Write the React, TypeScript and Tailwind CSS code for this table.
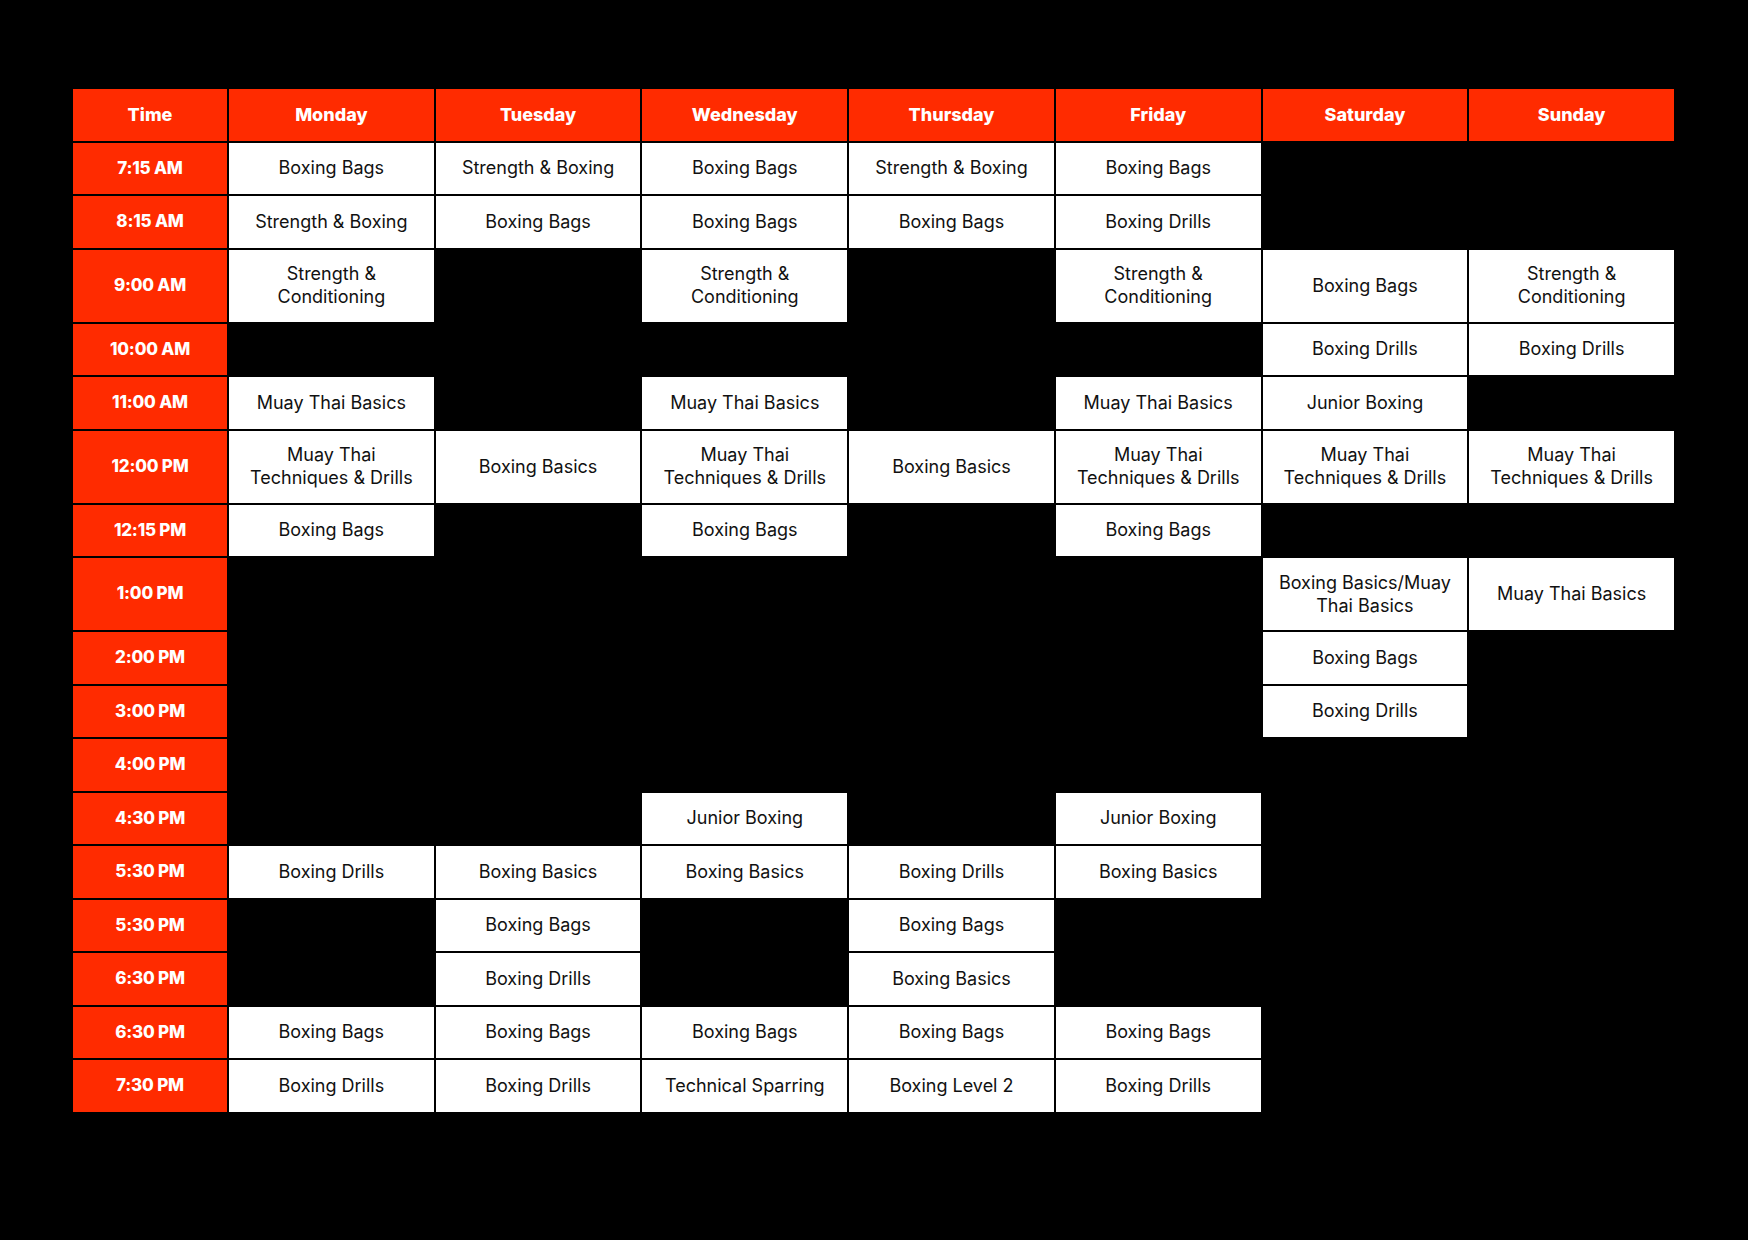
import React from "react";

type Row = {
  time: string;
  tall?: boolean;
  cells: (string | null)[];
};

const days = ["Monday", "Tuesday", "Wednesday", "Thursday", "Friday", "Saturday", "Sunday"];

const SC = "Strength &\nConditioning";
const MTT = "Muay Thai\nTechniques & Drills";

const rows: Row[] = [
  { time: "7:15 AM", cells: ["Boxing Bags", "Strength & Boxing", "Boxing Bags", "Strength & Boxing", "Boxing Bags", null, null] },
  { time: "8:15 AM", cells: ["Strength & Boxing", "Boxing Bags", "Boxing Bags", "Boxing Bags", "Boxing Drills", null, null] },
  { time: "9:00 AM", tall: true, cells: [SC, null, SC, null, SC, "Boxing Bags", SC] },
  { time: "10:00 AM", cells: [null, null, null, null, null, "Boxing Drills", "Boxing Drills"] },
  { time: "11:00 AM", cells: ["Muay Thai Basics", null, "Muay Thai Basics", null, "Muay Thai Basics", "Junior Boxing", null] },
  { time: "12:00 PM", tall: true, cells: [MTT, "Boxing Basics", MTT, "Boxing Basics", MTT, MTT, MTT] },
  { time: "12:15 PM", cells: ["Boxing Bags", null, "Boxing Bags", null, "Boxing Bags", null, null] },
  { time: "1:00 PM", tall: true, cells: [null, null, null, null, null, "Boxing Basics/Muay\nThai Basics", "Muay Thai Basics"] },
  { time: "2:00 PM", cells: [null, null, null, null, null, "Boxing Bags", null] },
  { time: "3:00 PM", cells: [null, null, null, null, null, "Boxing Drills", null] },
  { time: "4:00 PM", cells: [null, null, null, null, null, null, null] },
  { time: "4:30 PM", cells: [null, null, "Junior Boxing", null, "Junior Boxing", null, null] },
  { time: "5:30 PM", cells: ["Boxing Drills", "Boxing Basics", "Boxing Basics", "Boxing Drills", "Boxing Basics", null, null] },
  { time: "5:30 PM", cells: [null, "Boxing Bags", null, "Boxing Bags", null, null, null] },
  { time: "6:30 PM", cells: [null, "Boxing Drills", null, "Boxing Basics", null, null, null] },
  { time: "6:30 PM", cells: ["Boxing Bags", "Boxing Bags", "Boxing Bags", "Boxing Bags", "Boxing Bags", null, null] },
  { time: "7:30 PM", cells: ["Boxing Drills", "Boxing Drills", "Technical Sparring", "Boxing Level 2", "Boxing Drills", null, null] },
];

function Lines({ text }: { text: string }) {
  const parts = text.split("\n");
  return (
    <>
      {parts.map((p, i) => (
        <span key={i} className="block">
          {p}
        </span>
      ))}
    </>
  );
}

export default function App() {
  return (
    <div
      className="min-h-[1240px] w-[1748px] bg-black pl-[73px] pt-[89px]"
      style={{ fontFamily: "Inter, 'Noto Sans', sans-serif" }}
    >
      <div className="grid w-[1601px] grid-cols-[154px_repeat(7,1fr)] gap-[2px] bg-black">
        <div className="flex h-[51.5px] items-center justify-center bg-[#ff2b00] text-[18px] font-extrabold text-white">
          Time
        </div>
        {days.map((d) => (
          <div
            key={d}
            className="flex h-[51.5px] items-center justify-center bg-[#ff2b00] text-[18px] font-extrabold text-white"
          >
            {d}
          </div>
        ))}

        {rows.map((r, ri) => (
          <React.Fragment key={ri}>
            <div
              className={`flex items-center justify-center bg-[#ff2b00] text-[17px] font-extrabold tracking-[-0.2px] text-white ${
                r.tall ? "h-[72px]" : "h-[51.5px]"
              }`}
            >
              {r.time}
            </div>
            {r.cells.map((c, ci) =>
              c ? (
                <div
                  key={ci}
                  className={`flex flex-col items-center justify-center bg-white pb-[1px] text-center text-[18px] leading-[23px] text-[#111] ${
                    r.tall ? "h-[72px]" : "h-[51.5px]"
                  }`}
                >
                  <Lines text={c} />
                </div>
              ) : (
                <div key={ci} className={r.tall ? "h-[72px]" : "h-[51.5px]"} />
              )
            )}
          </React.Fragment>
        ))}
      </div>
    </div>
  );
}
